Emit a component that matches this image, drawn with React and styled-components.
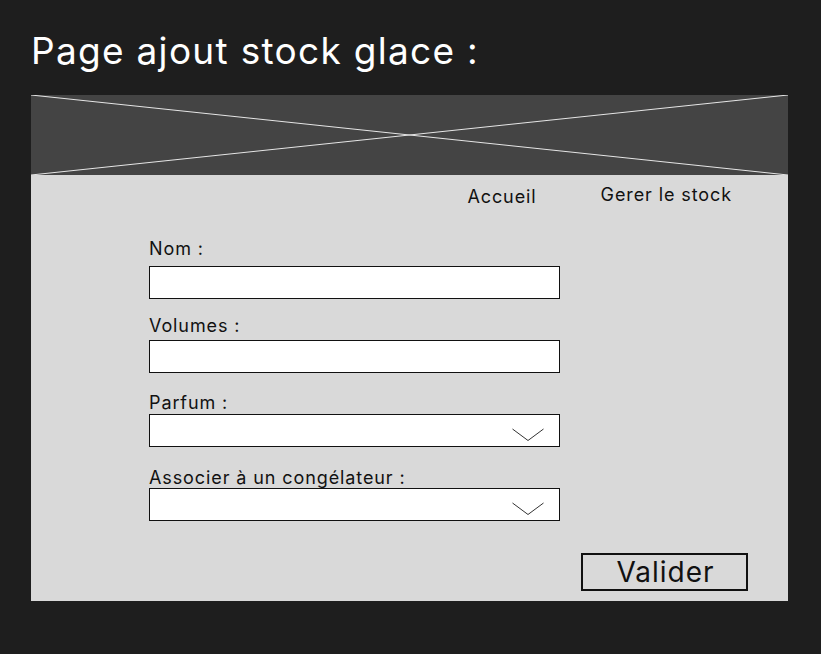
import React from 'react'
import styled, { createGlobalStyle } from 'styled-components'

const GlobalStyle = createGlobalStyle`
	html, body {
		margin: 0;
		padding: 0;
		background: #1e1e1e;
		font-family: Inter, "Noto Sans", sans-serif;
	}
`

const fields = [
	{ label: 'Nom :', top: 30, gap: 6 },
	{ label: 'Volumes :', top: 16, gap: 3 },
	{ label: 'Parfum :', top: 19, gap: 0, select: true },
	{ label: 'Associer à un congélateur :', top: 20, gap: -1, select: true },
]

const App = () =>
{
	return (
		<>
		<GlobalStyle/>
		<Page>
			<Title>Page ajout stock glace :</Title>
			<Frame>
				<Banner>
					<svg width="100%" height="100%" viewBox="0 0 757 80" preserveAspectRatio="none">
						<line x1="0" y1="0" x2="757" y2="80" stroke="#e6e6e6" strokeWidth="1"/>
						<line x1="0" y1="80" x2="757" y2="0" stroke="#e6e6e6" strokeWidth="1"/>
					</svg>
				</Banner>
				<Body>
					<Nav>
						<NavLink drop={2}>Accueil</NavLink>
						<NavLink>Gerer le stock</NavLink>
					</Nav>
					<Form>
						{fields.map(f => (
							<Field key={f.label} top={f.top}>
								<Label gap={f.gap}>{f.label}</Label>
								{f.select ? (
									<Select>
										<svg width="32" height="14" viewBox="0 0 32 14">
											<polyline points="0.5,1 16,12.5 31.5,1" fill="none" stroke="#333" strokeWidth="1"/>
										</svg>
									</Select>
								) : (
									<Input/>
								)}
							</Field>
						))}
					</Form>
					<Footer>
						<Button>Valider</Button>
					</Footer>
				</Body>
			</Frame>
		</Page>
		</>
	)
}

const Page = styled.div`
	display: flex;
	flex-direction: column;
	padding: 29px 0 0 31px;
	width: 790px;
	height: 625px;
`

const Title = styled.h1`
	margin: 0 0 22px 0;
	color: #ffffff;
	font-size: 37px;
	font-weight: 400;
	line-height: 44px;
	letter-spacing: 0.035em;
`

const Frame = styled.div`
	display: flex;
	flex-direction: column;
	width: 757px;
`

const Banner = styled.div`
	display: flex;
	height: 80px;
	background: #444444;
	svg {
		display: block;
	}
`

const Body = styled.div`
	display: flex;
	flex-direction: column;
	height: 426px;
	background: #d9d9d9;
`

const Nav = styled.div`
	display: flex;
	justify-content: flex-end;
	gap: 64px;
	padding: 9px 56px 0 0;
`

const NavLink = styled.div`
	color: #111;
	font-size: 18px;
	line-height: 22px;
	letter-spacing: 0.05em;
	padding-top: ${props => props.drop || 0}px;
	cursor: pointer;
`

const Form = styled.div`
	display: flex;
	flex-direction: column;
	width: 411px;
	margin-left: 118px;
`

const Field = styled.div`
	display: flex;
	flex-direction: column;
	margin-top: ${props => props.top}px;
`

const Label = styled.label`
	color: #111;
	font-size: 18px;
	line-height: 22px;
	letter-spacing: 0.05em;
	margin-bottom: ${props => props.gap}px;
`

const Input = styled.div`
	box-sizing: border-box;
	height: 33px;
	background: #ffffff;
	border: 1px solid #111;
`

const Select = styled(Input)`
	display: flex;
	justify-content: flex-end;
	align-items: flex-end;
	padding: 0 15px 4px 0;
`

const Footer = styled.div`
	display: flex;
	justify-content: flex-end;
	padding-right: 40px;
	margin-top: auto;
	margin-bottom: 10px;
`

const Button = styled.button`
	box-sizing: border-box;
	width: 167px;
	height: 38px;
	padding: 0 0 0 2px;
	background: transparent;
	border: 2px solid #111;
	color: #111;
	font-family: Inter, "Noto Sans", sans-serif;
	font-size: 28px;
	line-height: 34px;
	letter-spacing: 1px;
	cursor: pointer;
`

export default App
